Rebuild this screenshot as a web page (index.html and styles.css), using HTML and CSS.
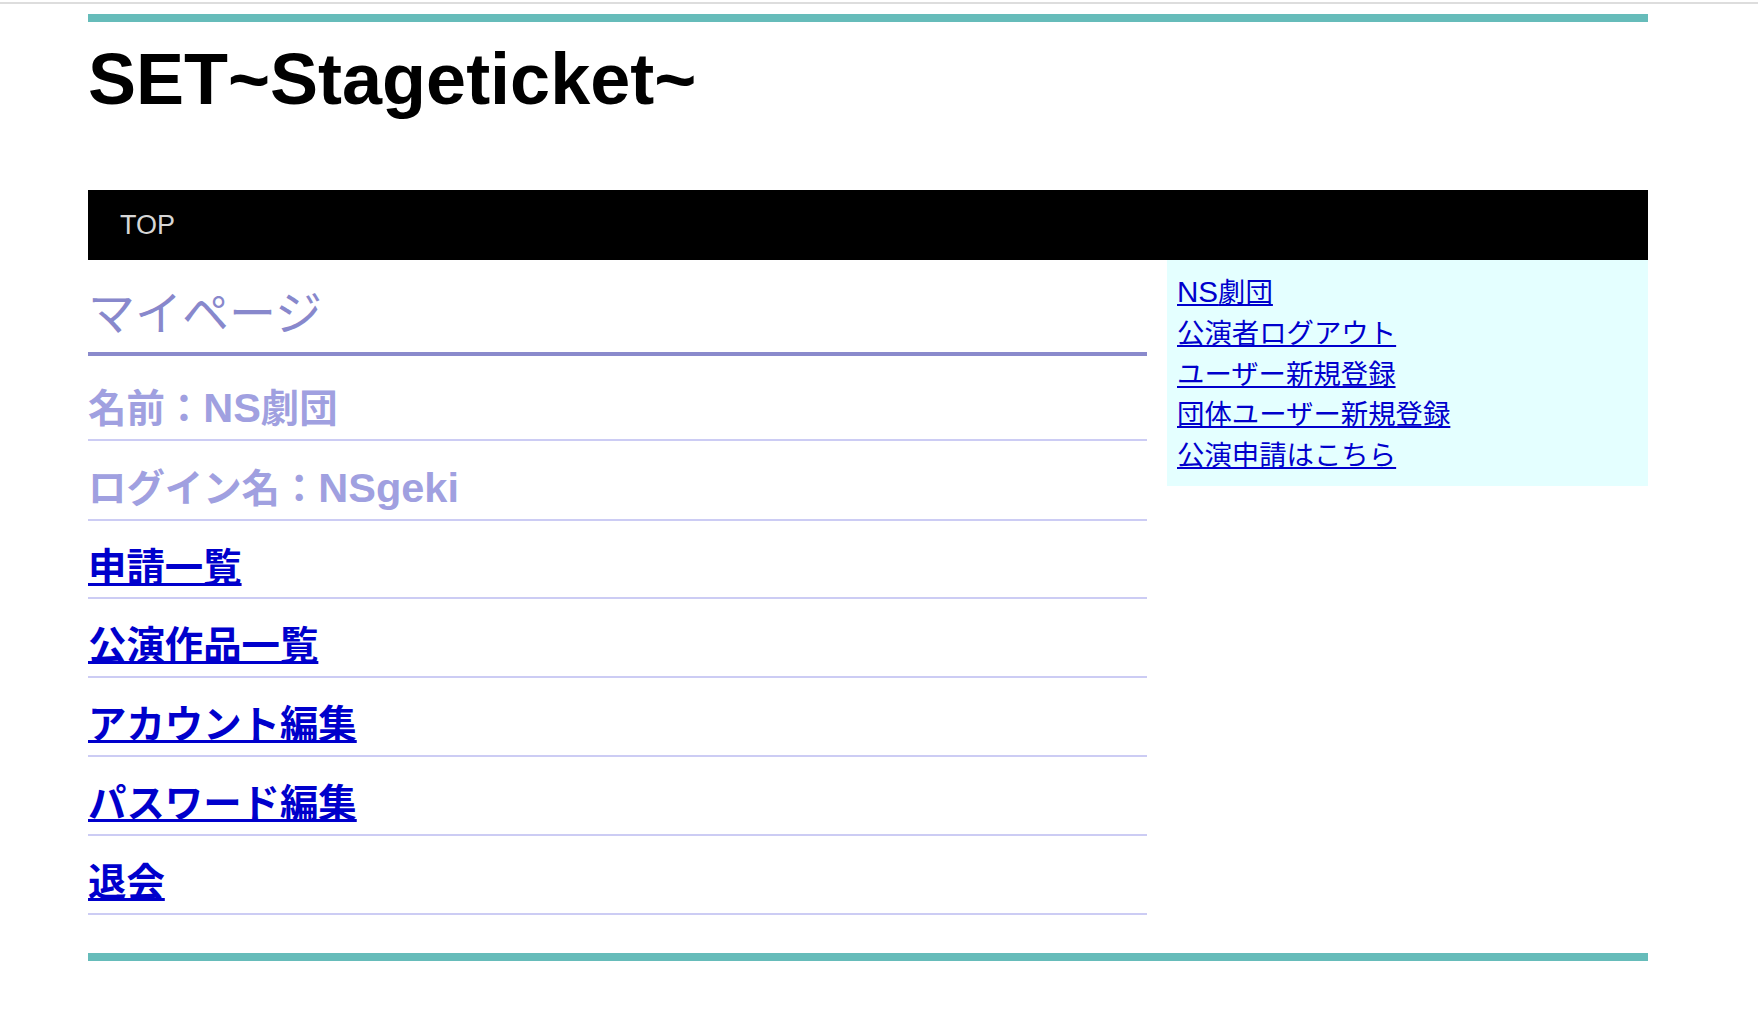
FILE: index.html
```html
<!DOCTYPE html>
<html lang="ja">
<head>
<meta charset="utf-8">
<title>SET~Stageticket~</title>
<link rel="stylesheet" href="styles.css">
</head>
<body>
<div class="topline"></div>
<div class="wrap">
  <div class="teal"></div>
  <h1 class="site-title">SET~Stageticket~</h1>
  <nav class="nav"><a class="nav-link" href="#">TOP</a></nav>
  <div class="content">
    <main class="main">
      <h2 class="page-title">マイページ</h2>
      <ul class="rows">
        <li class="row row-info">名前：<span class="latin">NS</span>劇団</li>
        <li class="row row-info">ログイン名：<span class="latin">NSgeki</span></li>
        <li class="row"><a href="#">申請一覧</a></li>
        <li class="row"><a href="#">公演作品一覧</a></li>
        <li class="row"><a href="#">アカウント編集</a></li>
        <li class="row"><a href="#">パスワード編集</a></li>
        <li class="row"><a href="#">退会</a></li>
      </ul>
    </main>
    <aside class="side">
      <a class="side-link" href="#"><span class="latin">NS</span>劇団</a>
      <a class="side-link" href="#">公演者ログアウト</a>
      <a class="side-link" href="#">ユーザー新規登録</a>
      <a class="side-link" href="#">団体ユーザー新規登録</a>
      <a class="side-link" href="#">公演申請はこちら</a>
    </aside>
  </div>
  <div class="teal teal-bottom"></div>
</div>
</body>
</html>
```
FILE: styles.css
```css
html, body {
  margin: 0;
  padding: 0;
  background: #ffffff;
}
body {
  font-family: "Liberation Sans", "Noto Sans CJK JP", sans-serif;
  color: #000;
}
.topline {
  height: 2px;
  margin-top: 2px;
  background: #dddddd;
}
.wrap {
  margin-left: 88px;
  width: 1560px;
}
.teal {
  height: 8px;
  margin-top: 10px;
  background: #66bcba;
}
.site-title {
  margin: 16px 0 0 0;
  font-size: 72px;
  font-weight: bold;
  line-height: 83px;
}
.nav {
  margin-top: 69px;
  height: 70px;
  background: #000;
  display: flex;
  align-items: center;
  padding-left: 32px;
}
.nav-link {
  color: #d6d6d6;
  text-decoration: none;
  font-size: 27px;
}
.content {
  display: flex;
  gap: 20px;
  align-items: flex-start;
}
.main {
  width: 1059px;
}
.page-title {
  margin: 18px 0 0 0;
  font-size: 47px;
  font-weight: normal;
  line-height: 72px;
  color: #8888cc;
  padding-bottom: 2px;
  border-bottom: 4px solid #8a8acc;
}
.rows {
  list-style: none;
  margin: 0;
  padding: 5px 0 0 0;
}
.row {
  margin-top: 19px;
  font-size: 38.4px;
  font-weight: bold;
  line-height: 56.8px;
  padding-bottom: 1px;
  border-bottom: 2px solid #ccccf4;
}
.row-info {
  color: #a0a0e0;
}
.latin {
  font-size: 1.08em;
}
.row a {
  color: #0000cc;
  text-decoration: underline;
}
.side {
  width: 481px;
  background: #e4ffff;
  padding: 12px 10px 9px 10px;
  box-sizing: border-box;
  display: flex;
  flex-direction: column;
  align-items: flex-start;
}
.side-link {
  font-size: 27.4px;
  line-height: 40.8px;
  color: #0000cc;
  text-decoration: underline;
}
.teal-bottom {
  margin-top: 38px;
}
```
